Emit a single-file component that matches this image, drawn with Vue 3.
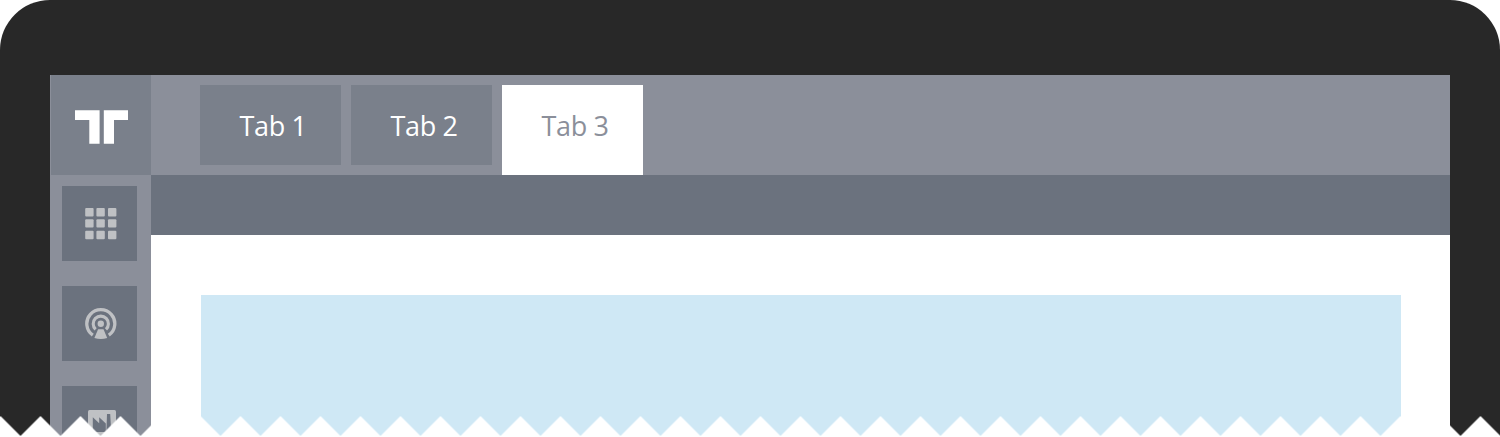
<script setup>
const tabs = [
  { label: 'Tab 1', active: false },
  { label: 'Tab 2', active: false },
  { label: 'Tab 3', active: true },
]
const cells = [0, 11.2, 22.8]
</script>

<template>
  <div class="device">
    <div class="screen">
      <aside class="sidebar">
        <div class="logo">
          <svg width="53" height="34" viewBox="0 0 53 34">
            <path d="M0 0.2H24.6V33.8H14.3V10H0ZM28.8 0.2H53V10H39V33.8H28.8Z" fill="#fff" />
          </svg>
        </div>
        <nav class="menu">
          <div class="item">
            <svg width="32" height="32" viewBox="0 0 32 32" fill="#bfc1c4">
              <template v-for="y in cells" :key="y">
                <rect v-for="x in cells" :key="x" :x="x + 0.2" :y="y" width="8.4" height="8.4" rx="1" />
              </template>
            </svg>
          </div>
          <div class="item">
            <svg width="32" height="32" viewBox="0 0 32 32" fill="none" stroke="#bfc1c4">
              <path d="M7.8 27.2A14 14 0 1 1 23.8 27.2" stroke-width="3.3" />
              <path d="M10.6 21.3A7.6 7.6 0 1 1 21 21.3" stroke-width="3.1" />
              <circle cx="15.8" cy="15.7" r="3.2" fill="#bfc1c4" stroke="none" />
              <path d="M13.1 21.2H18.5L22.2 30Q15.8 32.2 9.4 30Z" fill="#bfc1c4" stroke="none" />
            </svg>
          </div>
          <div class="item">
            <svg width="32" height="32" viewBox="0 0 32 32">
              <rect x="3" y="2" width="28" height="28" rx="1.5" fill="#bfc1c4" />
              <path d="M7.8 24V9.2L14.2 15.2V9.2L20.8 15.6V24ZM21.4 24L22 6H25.2L26.2 24Z" fill="#6b727e" />
            </svg>
          </div>
        </nav>
      </aside>
      <div class="main">
        <header class="tabs">
          <div v-for="tab in tabs" :key="tab.label" class="tab" :class="{ active: tab.active }">
            {{ tab.label }}
          </div>
        </header>
        <div class="toolbar"></div>
        <main class="body">
          <div class="panel"></div>
        </main>
      </div>
    </div>
    <svg class="tear" width="1500" height="21">
      <defs>
        <pattern id="teeth" x="20.5" width="40" height="21" patternUnits="userSpaceOnUse">
          <path d="M0 20L20 0L40 20V21H0Z" fill="#fff" />
        </pattern>
      </defs>
      <rect width="1500" height="21" fill="url(#teeth)" />
    </svg>
  </div>
</template>

<style>
body {
  background: #fff;
}
</style>

<style scoped>
.device {
  position: relative;
  box-sizing: border-box;
  width: 1500px;
  height: 437px;
  padding: 75px 50px 0;
  overflow: hidden;
  background: #282828;
  border-radius: 50px 50px 0 0;
}
.screen {
  display: flex;
  height: 362px;
  background: #fff;
}
.sidebar {
  width: 101px;
  flex: none;
  background: #8b8f9a;
}
.logo {
  display: flex;
  box-sizing: border-box;
  width: 100px;
  height: 100px;
  margin-left: 1px;
  padding: 35px 0 0 24px;
  background: #7a808b;
}
.menu {
  display: flex;
  flex-direction: column;
  gap: 25px;
  height: 251px;
  padding: 11px 0 0 12px;
  overflow: hidden;
}
.item {
  display: flex;
  box-sizing: border-box;
  width: 75px;
  height: 75px;
  flex: none;
  padding: 22px 0 0 23px;
  background: #6b727e;
}
.main {
  flex: 1;
}
.tabs {
  display: flex;
  box-sizing: border-box;
  height: 100px;
  gap: 10px;
  padding: 10px 0 0 49px;
  background: #8b8f9a;
}
.tab {
  box-sizing: border-box;
  width: 141px;
  height: 80px;
  padding-left: 39.6px;
  background: #7a808b;
  color: #fff;
  font: 27px/82px "Open Sans", sans-serif;
  letter-spacing: -0.4px;
  white-space: nowrap;
}
.tab.active {
  height: 90px;
  background: #fff;
  color: #8b8f9a;
}
.toolbar {
  height: 60px;
  background: #6b727e;
}
.body {
  padding: 60px 49px 0 50px;
}
.panel {
  height: 142px;
  background: #cfe8f5;
}
.tear {
  position: absolute;
  left: 0;
  bottom: 0;
}
</style>
